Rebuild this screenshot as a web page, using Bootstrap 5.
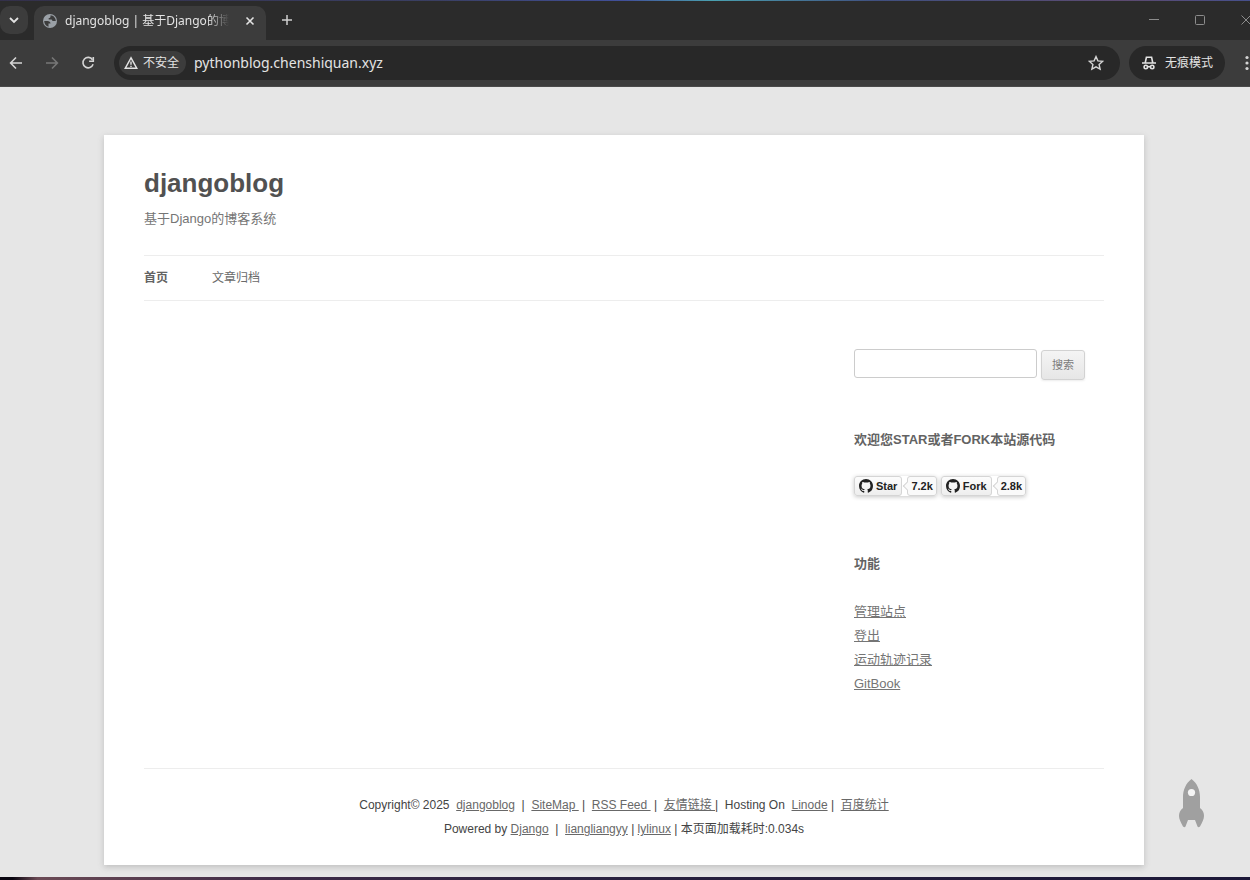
<!DOCTYPE html>
<html lang="zh-CN">
<head>
<meta charset="utf-8">
<meta name="viewport" content="width=device-width, initial-scale=1">
<title>djangoblog | 基于Django的博客系统</title>
<link href="https://cdn.jsdelivr.net/npm/bootstrap@5.3.0/dist/css/bootstrap.min.css" rel="stylesheet">
<style>
  body { background: #e6e6e6; font-family: "Liberation Sans", "Noto Sans CJK SC", sans-serif; font-size: 13px; line-height: 24px; color: #444; overflow-x: hidden; }
  svg { display: block; flex: none; }

  /* browser window */
  .chrome-ui, .chrome-ui button, .chrome-ui input { font-family: "Noto Sans", "Noto Sans CJK SC", sans-serif; color: #e3e3e3; }
  .chrome-ui button { background: none; border: 0; padding: 0; flex: none; }
  .desk-top { height: 1px; background: linear-gradient(90deg, #33304a, #3a3f63 35%, #41509a 50%, #4aa0b0 57%, #405080 70%, #5c4a70 90%, #46508c); }
  .desk-bottom { height: 3px; background: linear-gradient(90deg, #0a0610 1%, #6b4a55 3%, #3f2b48 22%, #2a2240 45%, #1c1838); }
  .tab-strip { height: 39px; background: #2b2b2b; padding-bottom: 2px; }
  .chrome-ui .tab-search { width: 28px; height: 28px; background: #3c3c3c; border-radius: 10px; margin-top: 5px; }
  .active-tab { width: 232px; height: 34px; margin: 5px 0 0 6px; padding: 0 11px 4px 9px; background: #3c3c3c; border-radius: 10px 10px 0 0; font-size: 12px; }
  .tab-title { -webkit-mask-image: linear-gradient(90deg, #000 88%, transparent); mask-image: linear-gradient(90deg, #000 88%, transparent); }
  .window-keys { gap: 36px; margin-right: -1px; }
  .tool-row { height: 47px; background: #3c3c3c; padding-left: 9px; border-bottom: 1px solid #4a4a4a; }
  .nav-keys { gap: 22px; margin-right: 19px; }
  .omnibox { height: 34px; border-radius: 17px; background: #282828; padding: 0 16px 0 5px; }
  .chrome-ui .site-chip { height: 24px; border-radius: 12px; background: #3c3c3c; padding: 0 7px 0 5px; font-size: 12px; gap: 5px; }
  .omnibox input { background: none; border: 0; outline: 0; padding: 0; margin-left: 8px; font-size: 14px; min-width: 0; }
  .chrome-ui .incognito { height: 34px; border-radius: 17px; background: #282828; padding: 0 12px; margin-left: 9px; font-size: 12px; }
  .chrome-ui .more-key { margin: 0 -5px 0 14px; }

  /* blog page */
  .blog-area { padding: 48px 2px 12px 0; }
  .sheet { width: 100%; max-width: 1040px; background: #fff; padding: 0 40px; box-shadow: 0 2px 6px rgba(100,100,100,.3); }
  .blog-head { padding-top: 32px; }
  .blog-head h1 { font-size: 26px; line-height: 32px; font-weight: 700; margin: 0 0 8px; }
  .blog-head h1 a { color: #515151; text-decoration: none; }
  .blog-head h2 { font-size: 13px; line-height: 24px; font-weight: 400; color: #757575; margin: 0; }
  .blog-nav { margin-top: 24px; border-top: 1px solid #ededed; border-bottom: 1px solid #ededed; gap: 44px; font-size: 12px; line-height: 44px; }
  .blog-nav a { color: #6a6a6a; text-decoration: none; }
  .blog-nav a.here { color: #636363; font-weight: 700; }
  .sidebar { width: 250px; padding-top: 48px; }
  .sidebar h3 { font-size: 13px; line-height: 24px; font-weight: 700; color: #636363; margin: 0 0 24px; }
  .find-form { margin-bottom: 48px; gap: 4px; }
  .find-form input { width: 183px; height: 29px; padding: 6px; border: 1px solid #ccc; border-radius: 3px; }
  .find-form button { width: 44px; height: 30px; margin-top: 1px; padding: 0; font-size: 11px; line-height: 16px; color: #7c7c7c; border: 1px solid #d2d2d2; border-radius: 3px; background: linear-gradient(#f4f4f4, #e6e6e6); box-shadow: 0 1px 2px rgba(64,64,64,.1); }
  .gh-row { gap: 4px; margin-bottom: 56px; font-size: 11px; line-height: 18px; font-weight: 700; }
  .gh-row a { color: #222; text-decoration: none; border: 1px solid #d5d5d5; border-radius: 3px; }
  .gh-pair { box-shadow: 0 1px 4px rgba(0,0,0,.22); border-radius: 3px; gap: 5px; background: #fff; }
  .gh-act { background: linear-gradient(#fcfcfc, #eee); padding: 0 4px; gap: 3px; }
  .gh-num { position: relative; padding: 0 3px; background: #fafafa; }
  .gh-num::before { content: ""; position: absolute; left: -4px; top: 6px; width: 6px; height: 6px; border: solid #d5d5d5; border-width: 0 0 1px 1px; background: #fafafa; transform: rotate(45deg); }
  .sidebar li a { color: #757575; }
  .blog-foot { margin-top: 72px; border-top: 1px solid #ededed; padding: 24px 0; font-size: 12px; color: #444; }
  .blog-foot a { color: #686868; white-space: pre; }
  .to-top { position: fixed; right: 45px; bottom: 52px; }
</style>
</head>
<body class="d-flex flex-column min-vh-100">
<header class="chrome-ui">
  <div class="desk-top"></div>
  <div class="tab-strip d-flex">
    <button class="tab-search d-flex align-items-center justify-content-center" aria-label="搜索标签页"><svg width="12" height="12" viewBox="0 0 12 12" fill="none" stroke="#e3e3e3" stroke-width="1.8"><path d="M2 4l4 4 4-4"/></svg></button>
    <div class="active-tab d-flex align-items-center">
      <svg width="14" height="14" viewBox="0 0 14 14"><circle cx="7" cy="7" r="7" fill="#9aa0a6"/><path d="M1.200 7h3.300c1.800 0 3 1 3 2.500H5.500v3.200C3 12.200 1.200 10 1.200 7zM7.500 1.300v1.200c0 1-.8 1.500-1.800 1.500v1.500h2.200c1 0 1.500.6 1.500 1.500H12.800C12.800 4 10.500 1.500 7.500 1.300z" fill="#3c3c3c"/></svg>
      <span class="tab-title flex-fill overflow-hidden text-nowrap ms-2 me-3">djangoblog | 基于Django的博客系统</span>
      <button aria-label="关闭标签页"><svg width="10" height="10" viewBox="0 0 10 10" stroke="#e3e3e3" stroke-width="1.600"><path d="M1.500 1.500l7 7M8.500 1.500l-7 7"/></svg></button>
    </div>
    <button class="ms-3" aria-label="新标签页"><svg width="10" height="10" viewBox="0 0 10 10" stroke="#d0d0d0" stroke-width="1.500"><path d="M0 5h10M5 0v10"/></svg></button>
    <div class="window-keys d-flex align-items-center ms-auto">
      <button aria-label="最小化"><svg width="10" height="10" viewBox="0 0 10 10" stroke="#8c8c8c"><path d="M0 4.500h10"/></svg></button>
      <button aria-label="最大化"><svg width="10" height="10" viewBox="0 0 10 10" fill="none" stroke="#8c8c8c"><rect x=".5" y=".5" width="9" height="9" rx="1"/></svg></button>
      <button aria-label="关闭"><svg width="10" height="10" viewBox="0 0 10 10" stroke="#8c8c8c"><path d="M.5.5l9 9M9.500.5l-9 9"/></svg></button>
    </div>
  </div>
  <div class="tool-row d-flex align-items-center">
    <div class="nav-keys d-flex">
      <button aria-label="后退"><svg width="14" height="14" viewBox="0 0 14 14" fill="none" stroke="#d5d5d5" stroke-width="1.600"><path d="M13 7H2M7 1.500L1.600 7 7 12.500"/></svg></button>
      <button aria-label="前进"><svg width="14" height="14" viewBox="0 0 14 14" fill="none" stroke="#777" stroke-width="1.600"><path d="M1 7h11M7 1.500L12.400 7 7 12.500"/></svg></button>
      <button aria-label="重新加载"><svg width="14" height="14" viewBox="0 0 14 14" fill="none" stroke="#d5d5d5" stroke-width="1.600"><path d="M11.500 3.700A5.200 5.200 0 1 0 12.100 8.300"/><path d="M12.300 1v4.200H8.100"/></svg></button>
    </div>
    <div class="omnibox d-flex align-items-center flex-fill">
      <button class="site-chip d-flex align-items-center"><svg width="14" height="14" viewBox="0 0 14 14" fill="none" stroke="#e3e3e3" stroke-width="1.400"><path d="M7 1.800L1.200 12.300h11.600z"/><path d="M7 5.500v3.200M7 9.700V11"/></svg>不安全</button>
      <input class="flex-fill" type="text" value="pythonblog.chenshiquan.xyz" aria-label="地址栏">
      <button aria-label="收藏"><svg width="16" height="16" viewBox="0 0 16 16" fill="none" stroke="#d5d5d5" stroke-width="1.400"><path d="M8 1.600l1.900 4.300 4.700.5-3.500 3.100 1 4.700L8 11.800l-4.100 2.400 1-4.700L1.400 6.400l4.700-.5z"/></svg></button>
    </div>
    <button class="incognito d-flex align-items-center gap-2"><svg width="16" height="14" viewBox="0 0 16 14" fill="none" stroke="#e3e3e3" stroke-width="1.600"><path d="M1 7h14M4.300 6.500L5.400 1.300h5.200l1.100 5.200"/><circle cx="4.800" cy="11" r="1.700"/><circle cx="11.200" cy="11" r="1.700"/><path d="M6.500 10.700h3"/></svg>无痕模式</button>
    <button class="more-key" aria-label="更多"><svg width="16" height="16" viewBox="0 0 16 16" fill="#d5d5d5"><circle cx="8" cy="2.500" r="1.600"/><circle cx="8" cy="8" r="1.600"/><circle cx="8" cy="13.500" r="1.600"/></svg></button>
  </div>
</header>

<main class="blog-area flex-fill d-flex">
  <div class="sheet mx-auto d-flex flex-column">
    <div class="blog-head">
      <h1><a href="#">djangoblog</a></h1>
      <h2>基于Django的博客系统</h2>
    </div>
    <nav class="blog-nav d-flex">
      <a class="here" href="#">首页</a>
      <a href="#">文章归档</a>
    </nav>
    <aside class="sidebar ms-auto">
      <form class="find-form d-flex align-items-start">
        <input type="text" aria-label="搜索">
        <button type="button">搜索</button>
      </form>
      <h3>欢迎您STAR或者FORK本站源代码</h3>
      <div class="gh-row d-flex">
        <div class="gh-pair d-flex">
          <a class="gh-act d-flex align-items-center" href="#"><svg width="14" height="14" viewBox="0 0 16 16" fill="#222"><path d="M8 0C3.580 0 0 3.580 0 8c0 3.540 2.290 6.530 5.470 7.590.4.070.55-.17.55-.38 0-.19-.01-.82-.01-1.490-2.010.37-2.530-.49-2.690-.94-.09-.23-.48-.94-.82-1.130-.28-.15-.68-.52-.01-.53.63-.01 1.080.58 1.230.82.72 1.210 1.870.87 2.330.66.07-.52.28-.87.51-1.070-1.780-.2-3.640-.89-3.640-3.950 0-.87.31-1.590.82-2.150-.08-.2-.36-1.020.08-2.120 0 0 .67-.21 2.200.82.64-.18 1.320-.27 2-.27s1.360.09 2 .27c1.530-1.040 2.200-.82 2.200-.82.44 1.100.16 1.920.08 2.120.51.56.82 1.270.82 2.150 0 3.070-1.870 3.750-3.650 3.950.29.25.54.73.54 1.480 0 1.070-.01 1.930-.01 2.200 0 .21.15.46.55.38A8.010 8.010 0 0 0 16 8c0-4.420-3.580-8-8-8z"/></svg>Star</a>
          <a class="gh-num" href="#">7.2k</a>
        </div>
        <div class="gh-pair d-flex">
          <a class="gh-act d-flex align-items-center" href="#"><svg width="14" height="14" viewBox="0 0 16 16" fill="#222"><path d="M8 0C3.580 0 0 3.580 0 8c0 3.540 2.290 6.530 5.470 7.590.4.070.55-.17.55-.38 0-.19-.01-.82-.01-1.490-2.010.37-2.530-.49-2.690-.94-.09-.23-.48-.94-.82-1.130-.28-.15-.68-.52-.01-.53.63-.01 1.080.58 1.230.82.72 1.210 1.870.87 2.330.66.07-.52.28-.87.51-1.070-1.780-.2-3.640-.89-3.640-3.950 0-.87.31-1.590.82-2.150-.08-.2-.36-1.020.08-2.120 0 0 .67-.21 2.200.82.64-.18 1.320-.27 2-.27s1.360.09 2 .27c1.530-1.040 2.200-.82 2.200-.82.44 1.100.16 1.920.08 2.120.51.56.82 1.270.82 2.150 0 3.070-1.870 3.750-3.650 3.950.29.25.54.73.54 1.480 0 1.070-.01 1.930-.01 2.200 0 .21.15.46.55.38A8.010 8.010 0 0 0 16 8c0-4.420-3.580-8-8-8z"/></svg>Fork</a>
          <a class="gh-num" href="#">2.8k</a>
        </div>
      </div>
      <h3>功能</h3>
      <ul class="list-unstyled mb-0">
        <li><a href="#">管理站点</a></li>
        <li><a href="#">登出</a></li>
        <li><a href="#">运动轨迹记录</a></li>
        <li><a href="#">GitBook</a></li>
      </ul>
    </aside>
    <footer class="blog-foot text-center">
      <div>Copyright©&nbsp;2025&nbsp; <a href="#">djangoblog</a>&nbsp; |&nbsp; <a href="#">SiteMap </a>&nbsp;|&nbsp; <a href="#">RSS Feed </a>&nbsp;|&nbsp; <a href="#">友情链接 </a>|&nbsp; Hosting On&nbsp; <a href="#">Linode</a>&nbsp;|&nbsp; <a href="#">百度统计</a></div>
      <div>Powered by <a href="#">Django</a>&nbsp; |&nbsp; <a href="#">liangliangyy</a> | <a href="#">lylinux</a> | 本页面加载耗时:0.034s</div>
    </footer>
  </div>
</main>
<div class="desk-bottom"></div>
<a class="to-top" href="#" aria-label="返回顶部"><svg width="27" height="49" viewBox="0 0 27 49"><path d="M13.500 0C8 4 5 11 5 18v11C2 31 1 34 1 37c0 3 2 7 4 10.500 1 1 2 1 2.500 0L10 41h7l2.500 6.500c.5 1 1.500 1 2.500 0 2-3.500 4-7.500 4-10.500 0-3-1-6-4-8V18c0-7-3-14-8.500-18z" fill="#a0a0a0"/><circle cx="13.500" cy="13.500" r="3.600" fill="#f4f4f4"/></svg></a>
<script src="https://cdn.jsdelivr.net/npm/bootstrap@5.3.0/dist/js/bootstrap.bundle.min.js"></script>
</body>
</html>
